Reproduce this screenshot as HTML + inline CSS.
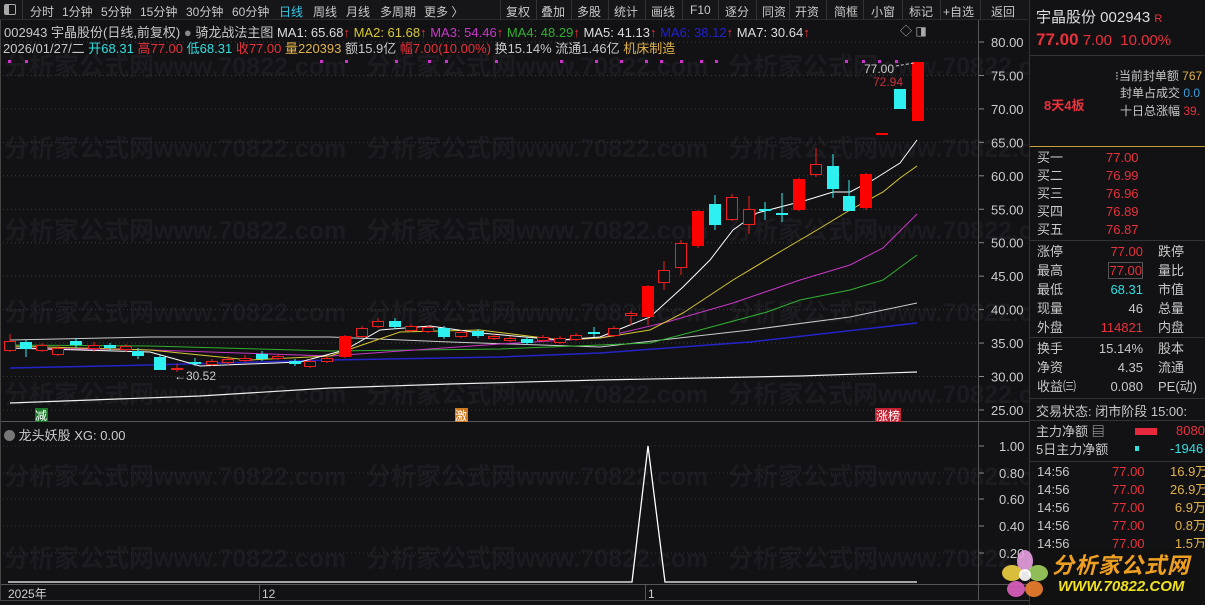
<!DOCTYPE html>
<html><head><meta charset="utf-8">
<style>
*{margin:0;padding:0;box-sizing:border-box}
body{width:1205px;height:605px;background:#121114;overflow:hidden;position:relative;font-family:"Liberation Sans","Noto Sans CJK SC",sans-serif;font-size:12px;color:#c8c8c8}
.a{position:absolute;white-space:nowrap}
#tb{position:absolute;left:0;top:0;width:1028px;height:20px;background:#161518;border-bottom:1px solid #2a2a2a}
#tb span{position:absolute;top:3px;font-size:12px;color:#c8c8c8}
.sep{position:absolute;top:0;width:1px;height:20px;background:#333}
#rp{position:absolute;left:1029px;top:0;width:176px;height:605px;background:#121114;border-left:1px solid #333}
.r{color:#e8323c}.c{color:#2fe0e0}.y{color:#e2b34a}.w{color:#c8c8c8}
.hl{position:absolute;left:0;width:176px;height:1px;background:#333}
</style></head><body>
<div id="tb">
<div class="a" style="left:4px;top:4px;width:12px;height:11px;border:1px solid #aaa;border-radius:2px"><div style="width:4px;height:9px;background:#aaa"></div></div>
<div class="sep" style="left:22px"></div>
<span style="left:30px">分时</span><span style="left:62px">1分钟</span><span style="left:101px">5分钟</span><span style="left:140px">15分钟</span><span style="left:186px">30分钟</span><span style="left:232px">60分钟</span><span style="left:279px;color:#33c8e8">日线</span><span style="left:313px">周线</span><span style="left:346px">月线</span><span style="left:380px">多周期</span><span style="left:424px">更多 〉</span>
<div class="sep" style="left:500px"></div><span style="left:506px">复权</span><div class="sep" style="left:536px"></div><span style="left:541px">叠加</span><div class="sep" style="left:571px"></div><span style="left:577px">多股</span><div class="sep" style="left:608px"></div><span style="left:614px">统计</span><div class="sep" style="left:645px"></div><span style="left:651px">画线</span><div class="sep" style="left:682px"></div><span style="left:690px">F10</span><div class="sep" style="left:718px"></div><span style="left:725px">逐分</span><div class="sep" style="left:756px"></div><span style="left:762px">同资</span><div class="sep" style="left:789px"></div><span style="left:795px">开资</span><div class="sep" style="left:826px"></div><span style="left:834px">简框</span><div class="sep" style="left:863px"></div><span style="left:871px">小窗</span><div class="sep" style="left:902px"></div><span style="left:909px">标记</span><div class="sep" style="left:940px"></div><span style="left:943px">+自选</span><div class="sep" style="left:980px"></div><span style="left:991px">返回</span>
</div>
<div class="a" style="left:4px;top:22px;font-size:13px">002943 宇晶股份(日线,前复权) <span style="color:#888">●</span> 骑龙战法主图 <span style="color:#ddd">MA1: 65.68</span><span class="r">↑</span> <span style="color:#d8c832">MA2: 61.68</span><span class="r">↑</span> <span style="color:#c838c8">MA3: 54.46</span><span class="r">↑</span> <span style="color:#30b030">MA4: 48.29</span><span class="r">↑</span> <span style="color:#ddd">MA5: 41.13</span><span class="r">↑</span> <span style="color:#2020d0">MA6: 38.12</span><span class="r">↑</span> <span style="color:#ddd">MA7: 30.64</span><span class="r">↑</span></div>
<div class="a" style="left:900px;top:22px;color:#aaa;font-size:12px">◇ ◨</div>
<div class="a" style="left:3px;top:38px;font-size:13px">2026/01/27/二 <span class="c">开68.31</span> <span class="r">高77.00</span> <span class="c">低68.31</span> <span class="r">收77.00</span> <span class="y">量220393</span> 额15.9亿 <span class="r">幅7.00(10.00%)</span> 换15.14% 流通1.46亿 <span class="y">机床制造</span></div>
<svg class="a" style="left:0;top:0" width="1029" height="605" id="sv"></svg>
<div class="a" style="left:4px;top:425px;color:#ccc;font-size:13px"><span style="display:inline-block;width:11px;height:11px;border-radius:50%;background:#777;vertical-align:-1px"></span> 龙头妖股 XG: 0.00</div>
<div id="rp">
<div class="a" style="left:6px;top:6px;font-size:15px;color:#ddd">宇晶股份 002943 <span class="r" style="font-size:11px">R</span></div>
<div class="a" style="left:6px;top:30px;font-size:15px"><b class="r" style="font-size:17px">77.00</b> <span class="r">7.00</span> &nbsp;<span class="r">10.00%</span></div>
<div class="hl" style="top:55px"></div>
<div class="a" style="left:85px;top:67px">⁝当前封单额 <span class="y">767</span></div>
<div class="a" style="left:90px;top:84px">封单占成交 <span style="color:#3aa0e0">0.0</span></div>
<div class="a" style="left:90px;top:102px">十日总涨幅 <span class="r">39.</span></div>
<div class="a r" style="left:14px;top:95px;font-weight:bold;font-size:13px">8天4板</div>
<div class="hl" style="top:146px;background:#c8a040"></div>
<div class="a" style="left:7px;top:149px;line-height:18px;font-size:13px">买一<br>买二<br>买三<br>买四<br>买五</div>
<div class="a r" style="left:76px;top:149px;line-height:18px;font-size:13px">77.00<br>76.99<br>76.96<br>76.89<br>76.87</div>
<div class="hl" style="top:240px"></div>
<div class="a" style="left:7px;top:242px;line-height:19px;font-size:13px">涨停<br>最高<br>最低<br>现量<br>外盘</div>
<div class="a" style="left:48px;top:242px;width:65px;text-align:right;line-height:19px;font-size:13px"><span class="r">77.00</span><br><span class="r" style="border:1px solid #555">77.00</span><br><span class="c">68.31</span><br>46<br><span class="r">114821</span></div>
<div class="a" style="left:128px;top:242px;line-height:19px;font-size:13px">跌停<br>量比<br>市值<br>总量<br>内盘</div>
<div class="hl" style="top:337px"></div>
<div class="a" style="left:7px;top:339px;line-height:19px;font-size:13px">换手<br>净资<br>收益㈢</div>
<div class="a" style="left:48px;top:339px;width:65px;text-align:right;line-height:19px;font-size:13px">15.14%<br>4.35<br>0.080</div>
<div class="a" style="left:128px;top:339px;line-height:19px;font-size:13px">股本<br>流通<br>PE(动)</div>
<div class="hl" style="top:398px"></div>
<div class="a" style="left:6px;top:401px;font-size:13px">交易状态: 闭市阶段 15:00:</div>
<div class="hl" style="top:420px"></div>
<div class="a" style="left:6px;top:423px;line-height:18px;font-size:13px">主力净额 ▤<br>5日主力净额</div>
<div class="a" style="left:105px;top:428px;width:22px;height:7px;background:#e8283c"></div>
<div class="a" style="left:105px;top:446px;width:4px;height:5px;background:#2fe0e0"></div>
<div class="a r" style="left:146px;top:423px;font-size:13px">8080</div>
<div class="a c" style="left:140px;top:441px;font-size:13px">-1946</div>
<div class="hl" style="top:461px"></div>
<div class="a" style="left:7px;top:463px;line-height:18px;font-size:13px">14:56<br>14:56<br>14:56<br>14:56<br>14:56</div>
<div class="a r" style="left:82px;top:463px;line-height:18px;font-size:13px">77.00<br>77.00<br>77.00<br>77.00<br>77.00</div>
<div class="a y" style="left:140px;top:463px;line-height:18px;font-size:13px;width:36px;text-align:right;overflow:hidden">16.9万<br>26.9万<br>6.9万<br>0.8万<br>1.5万</div>
<div class="a" style="left:0;top:548px;width:176px;height:57px;background:#111"></div>
<svg class="a" style="left:-30px;top:545px" width="50" height="60"><g fill-opacity=".9"><ellipse cx="25" cy="16" rx="8" ry="11" fill="#e8a0e0"/><ellipse cx="12" cy="28" rx="10" ry="8" fill="#f0d040"/><ellipse cx="38" cy="28" rx="10" ry="8" fill="#a0d060"/><ellipse cx="16" cy="44" rx="9" ry="8" fill="#e060c0"/><ellipse cx="34" cy="44" rx="9" ry="8" fill="#f08030"/><circle cx="25" cy="30" r="6" fill="#fff"/></g></svg>
<div class="a" style="left:22px;top:548px;font-size:22px;font-weight:bold;color:#f0a020;font-style:italic;letter-spacing:1px">分析家公式网</div>
<div class="a" style="left:28px;top:578px;font-size:15px;font-weight:bold;color:#f0e020;font-style:italic">WWW.70822.COM</div>
</div>
<script>
const s=document.getElementById('sv');let h='';
const Y=p=>42+(80-p)*6.69;
[65,147,229,311,393,475,557].forEach(y=>{[0,362,724].forEach(x=>{h+=`<text x="${x+4}" y="${y+10}" font-size="25" font-weight="bold" fill="#1c1b1f" font-family="Liberation Sans,Noto Sans CJK SC,sans-serif">分析家公式网www.70822.com</text>`})});
for(let p=25;p<=80;p+=5){let y=Y(p);h+=`<line x1="3" y1="${y}" x2="978" y2="${y}" stroke="#3a3a3a" stroke-dasharray="1 3"/><line x1="978" y1="${y}" x2="984" y2="${y}" stroke="#888"/><text x="991" y="${y+5}" font-size="13" fill="#ccc">${p.toFixed(2)}</text>`}
[[1,446],[.8,473],[.6,499],[.4,526],[.2,553]].forEach(([v,y])=>{h+=`<line x1="3" y1="${y}" x2="978" y2="${y}" stroke="#333" stroke-dasharray="1 3"/><line x1="978" y1="${y}" x2="984" y2="${y}" stroke="#888"/><text x="999" y="${y+5}" font-size="13" fill="#ccc">${v.toFixed(2)}</text>`});
h+=`<line x1="978.5" y1="20" x2="978.5" y2="600" stroke="#555"/><line x1="0" y1="421.5" x2="1029" y2="421.5" stroke="#555"/><line x1="0" y1="584.5" x2="1029" y2="584.5" stroke="#555"/><line x1="0" y1="600.5" x2="1029" y2="600.5" stroke="#444"/><line x1="0.5" y1="20" x2="0.5" y2="600" stroke="#444"/>`;
[8,25,320,345,395,428,445,495,560,595,620,645,660,680,700,715,845,862,878,895].forEach(x=>{h+=`<rect x="${x}" y="60" width="3" height="3" fill="#d030d0"/>`});
const L=(pts,c,w)=>{h+=`<polyline points="${pts}" fill="none" stroke="${c}" stroke-width="${w||1}"/>`};
L("10,403 200,396 330,388 450,384 600,380 800,376 917,372","#eee",1.2);
L("10,368 150,365 330,360 500,357 600,353 750,342 917,323","#2424c8",1.5);
L("10,340 150,337 330,337 450,342 600,347 750,330 850,317 917,303","#ccc");
L("10,345 150,346 330,351 500,349 600,345 650,343 700,330 767,312 800,300 850,290 883,280 917,255","#30b030");
L("10,348 150,350 330,356 500,344 600,338 667,322 733,303 800,280 850,265 883,248 917,214","#c838c8");
L("10,346 150,350 250,360 330,356 400,332 480,330 560,340 600,338 650,330 683,313 733,280 783,250 817,230 850,210 883,192 900,178 917,166","#d8c832");
L("10,348 150,352 200,366 300,362 345,350 380,330 430,326 480,333 560,340 600,337 650,317 683,287 710,260 733,230 757,213 807,200 833,192 850,192 873,180 900,163 917,140","#fff");
const C=[[10,341,350,'r',334,352],[26,342,349,'c',340,357],[42,345,350,'r',343,352],[58,348,354,'r',345,356],[76,341,345,'c',338,348],[94,345,348,'r',342,352],[110,345,348,'c',343,351],[126,346,349,'r',344,352],[138,351,356,'c',348,359],[160,357,370,'c',355,370],[177,368,369,'r',364,372],[195,362,363,'c',358,366],[212,361,364,'r',359,366],[228,359,362,'r',356,365],[245,358,360,'r',355,362],[262,354,359,'c',351,361],[278,356,358,'r',354,360],[295,361,364,'c',359,366],[310,361,366,'r',359,368],[327,358,361,'r',356,363],[345,336,357,'R',335,358],[362,328,336,'r',326,338],[378,321,326,'r',318,328],[395,321,327,'c',318,329],[411,326,330,'r',324,332],[428,327,331,'r',325,333],[444,328,337,'c',326,339],[461,332,336,'r',330,338],[478,331,336,'c',329,338],[494,336,338,'r',334,340],[510,338,340,'r',336,342],[527,339,343,'c',337,345],[543,337,340,'r',335,342],[560,338,342,'r',336,344],[576,335,339,'r',333,341],[594,332,334,'c',327,337],[614,328,335,'r',326,337],[631,313,315,'r',311,325],[648,286,317,'R',285,325],[664,270,282,'r',261,290],[681,243,267,'r',240,275],[698,211,246,'R',210,248],[715,204,225,'c',195,230],[732,197,219,'r',194,221],[749,209,224,'r',196,234],[765,209,211,'c',202,220],[782,213,215,'c',193,222],[799,179,210,'R',178,211],[816,164,174,'r',148,177],[833,166,189,'c',154,198],[849,196,211,'c',180,211],[866,174,208,'R',173,210],[882,133,135,'R',133,135],[900,89,109,'c',89,109],[918,62,121,'R',62,121]];
C.forEach(([x,t,b,k,hi,lo])=>{const col=k=='c'?'#2ff0f0':'#f02020';const w=12;
h+=`<line x1="${x}" y1="${hi}" x2="${x}" y2="${lo}" stroke="${col}"/>`;
if(k=='r')h+=`<rect x="${x-w/2+.5}" y="${t+.5}" width="${w-1}" height="${Math.max(b-t,1)}" fill="#121114" stroke="${col}"/>`;
else h+=`<rect x="${x-w/2}" y="${t}" width="${w}" height="${Math.max(b-t,2)}" fill="${k=='R'?'#ff0000':'#2ff0f0'}"/>`;});
h+=`<text x="174" y="380" font-size="12" fill="#ccc">←30.52</text><text x="864" y="73" font-size="12" fill="#ccc">77.00</text><line x1="896" y1="66" x2="914" y2="63" stroke="#ccc" stroke-dasharray="3 2"/><text x="873" y="86" font-size="12" fill="#c83040">72.94</text>`;
h+=`<rect x="35" y="408" width="13" height="14" fill="#1a7a2a"/><text x="35" y="420" font-size="12" fill="#fff">减</text><rect x="455" y="408" width="13" height="14" fill="#d07820"/><text x="455" y="420" font-size="12" fill="#fff">激</text><rect x="875" y="408" width="26" height="14" fill="#c02030"/><text x="876" y="420" font-size="12" fill="#fff">涨榜</text>`;
h+=`<polyline points="8,582 632,582 648,446 665,582 917,582" fill="none" stroke="#fff" stroke-width="1.3"/>`;
h+=`<text x="8" y="598" font-size="12" fill="#ccc">2025年</text><line x1="259.5" y1="585" x2="259.5" y2="600" stroke="#555"/><text x="262" y="598" font-size="12" fill="#ccc">12</text><line x1="645.5" y1="585" x2="645.5" y2="600" stroke="#555"/><text x="648" y="598" font-size="12" fill="#ccc">1</text>`;
s.innerHTML=h;
</script>
</body></html>
